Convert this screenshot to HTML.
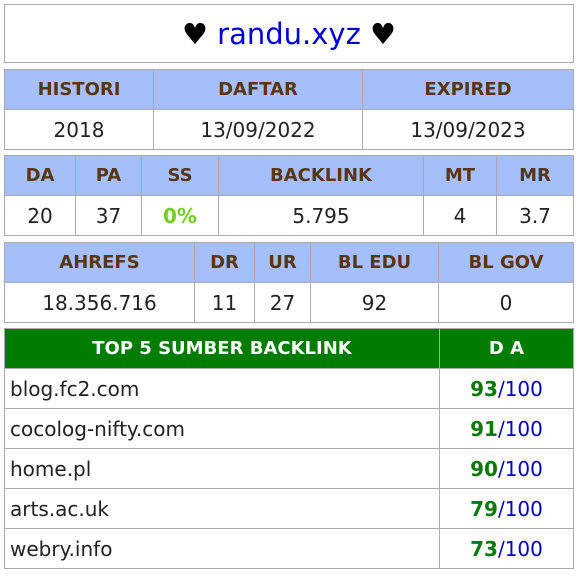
<!DOCTYPE html>
<html><head><meta charset="utf-8"><style>
body{margin:0;background:#fff;font-family:"DejaVu Sans","Liberation Sans",sans-serif;}
.box{position:absolute;left:4px;width:568px;height:57px;top:4px;border:1px solid #aaa;text-align:center;line-height:58px;font-size:29px;}
.box .h{color:#000}.box .d{color:#0000dd}
table{position:absolute;left:4px;width:570px;border-collapse:collapse;table-layout:fixed;}
td{border:1px solid #aaa;height:39px;padding:0;text-align:center;font-size:20px;color:#222;}
tr.hd td{background:#a4bffb;color:#5a3511;font-weight:bold;font-size:18px;}
tr.g td{background:#007d00;color:#fff;font-weight:bold;font-size:18px;}
td.l{text-align:left;padding-left:5px;font-size:20px;}
.gn{color:#0a7a0a;font-weight:bold}.bl{color:#0000cc}
.ss{color:#6fd11d;font-weight:bold}
</style></head><body>
<div class="box"><span class="h">♥</span> <span class="d">randu.xyz</span> <span class="h">♥</span></div>
<table style="top:69px"><colgroup><col style="width:149px"><col style="width:209px"><col></colgroup>
<tr class="hd"><td>HISTORI</td><td>DAFTAR</td><td>EXPIRED</td></tr>
<tr><td>2018</td><td>13/09/2022</td><td>13/09/2023</td></tr></table>
<table style="top:155px"><colgroup><col style="width:71px"><col style="width:66px"><col style="width:77px"><col style="width:205px"><col style="width:73px"><col></colgroup>
<tr class="hd"><td>DA</td><td>PA</td><td>SS</td><td>BACKLINK</td><td>MT</td><td>MR</td></tr>
<tr><td>20</td><td>37</td><td class="ss">0%</td><td>5.795</td><td>4</td><td>3.7</td></tr></table>
<table style="top:242px"><colgroup><col style="width:190px"><col style="width:60px"><col style="width:56px"><col style="width:128px"><col></colgroup>
<tr class="hd"><td>AHREFS</td><td>DR</td><td>UR</td><td>BL EDU</td><td>BL GOV</td></tr>
<tr><td>18.356.716</td><td>11</td><td>27</td><td>92</td><td>0</td></tr></table>
<table style="top:328px"><colgroup><col style="width:435px"><col></colgroup>
<tr class="g"><td>TOP 5 SUMBER BACKLINK</td><td>D A</td></tr>
<tr><td class="l">blog.fc2.com</td><td><span class="gn">93</span><span class="bl">/100</span></td></tr>
<tr><td class="l">cocolog-nifty.com</td><td><span class="gn">91</span><span class="bl">/100</span></td></tr>
<tr><td class="l">home.pl</td><td><span class="gn">90</span><span class="bl">/100</span></td></tr>
<tr><td class="l">arts.ac.uk</td><td><span class="gn">79</span><span class="bl">/100</span></td></tr>
<tr><td class="l">webry.info</td><td><span class="gn">73</span><span class="bl">/100</span></td></tr>
</table>
</body></html>
